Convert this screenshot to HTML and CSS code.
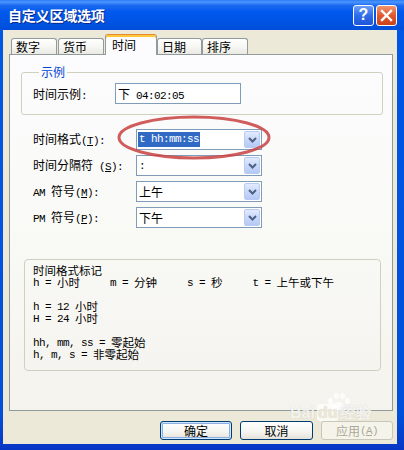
FILE: index.html
```html
<!DOCTYPE html>
<html>
<head>
<meta charset="utf-8">
<link rel="stylesheet" href="styles.css">
</head>
<body>
<div class="window">
  <div class="titlebar">
    <span class="title">自定义区域选项</span>
    <div class="tbtns">
      <div class="tbtn help">?</div>
      <div class="tbtn close"><svg width="13" height="13" viewBox="0 0 13 13"><path d="M2 2 L11 11 M11 2 L2 11" stroke="#fff" stroke-width="2.4" stroke-linecap="square"/></svg></div>
    </div>
  </div>
  <div class="client">
    <div class="tabs">
      <div class="tab t1">数字</div>
      <div class="tab t2">货币</div>
      <div class="tab active">时间</div>
      <div class="tab t4">日期</div>
      <div class="tab t5">排序</div>
    </div>
    <div class="panel">
      <fieldset class="group sample">
        <legend>示例</legend>
        <div class="srow">
          <span class="slbl">时间示例<span class="a">:</span></span>
          <div class="textbox">下<span class="a"> 04:02:05</span></div>
        </div>
      </fieldset>
      <div class="form">
        <span class="lbl">时间格式<span class="a">(<u>T</u>):</span></span>
        <div class="combo"><span class="val sel a">t hh:mm:ss</span><span class="dd"><svg width="9" height="6" viewBox="0 0 9 6"><path d="M1 1 L4.5 4.5 L8 1" fill="none" stroke="#4D6185" stroke-width="2"/></svg></span></div>
        <span class="lbl">时间分隔符<span class="a"> (<u>S</u>):</span></span>
        <div class="combo"><span class="val a">:</span><span class="dd"><svg width="9" height="6" viewBox="0 0 9 6"><path d="M1 1 L4.5 4.5 L8 1" fill="none" stroke="#4D6185" stroke-width="2"/></svg></span></div>
        <span class="lbl"><span class="a">AM </span>符号<span class="a">(<u>M</u>):</span></span>
        <div class="combo"><span class="val">上午</span><span class="dd"><svg width="9" height="6" viewBox="0 0 9 6"><path d="M1 1 L4.5 4.5 L8 1" fill="none" stroke="#4D6185" stroke-width="2"/></svg></span></div>
        <span class="lbl"><span class="a">PM </span>符号<span class="a">(<u>P</u>):</span></span>
        <div class="combo"><span class="val">下午</span><span class="dd"><svg width="9" height="6" viewBox="0 0 9 6"><path d="M1 1 L4.5 4.5 L8 1" fill="none" stroke="#4D6185" stroke-width="2"/></svg></span></div>
      </div>
      <div class="group notes">
        <div class="ln"><span class="c">时间格式标记</span></div>
        <div class="ln"><span class="a">h = </span><span class="c">小时</span><span class="a">     m = </span><span class="c">分钟</span><span class="a">     s = </span><span class="c">秒</span><span class="a">     t = </span><span class="c">上午或下午</span></div>
        <div class="ln"></div>
        <div class="ln"><span class="a">h = 12 </span><span class="c">小时</span></div>
        <div class="ln"><span class="a">H = 24 </span><span class="c">小时</span></div>
        <div class="ln"></div>
        <div class="ln"><span class="a">hh, mm, ss = </span><span class="c">零起始</span></div>
        <div class="ln"><span class="a">h, m, s = </span><span class="c">非零起始</span></div>
      </div>
    </div>
    <div class="buttons">
      <div class="btn default">确定</div>
      <div class="btn">取消</div>
      <div class="btn disabled">应用<span class="a">(<u>A</u>)</span></div>
    </div>
  </div>
  <svg class="ellipse" width="158" height="48" viewBox="0 0 158 48"><ellipse cx="79" cy="23.5" rx="75" ry="20.5" fill="none" stroke="#C8403F" stroke-width="3" opacity="0.85"/></svg>
  <div class="watermark">
    <div class="paw"><i class="p1"></i><i class="p2"></i><i class="p3"></i><i class="p4"></i><i class="p5"></i></div>
    <div class="wm-text">Bai<span class="du">du</span>经验</div>
  </div>
</div>
</body>
</html>
```
FILE: styles.css
```css
* { box-sizing: border-box; }
html, body { margin: 0; padding: 0; }
body {
  width: 404px; height: 450px; overflow: hidden;
  font-family: "Noto Sans CJK SC", "Liberation Sans", sans-serif;
  font-size: 12px; color: #000; background: #fff;
}
.a {
  font-family: "Liberation Mono", "Noto Sans CJK SC", monospace;
  font-size: 11px; letter-spacing: -0.6px;
}
.window {
  position: relative;
  width: 404px; height: 450px;
  display: flex; flex-direction: column;
  background: linear-gradient(180deg, #0058E6 0%, #0050DA 92%, #0836C4 100%);
}
.titlebar {
  height: 30px; flex: none;
  display: flex; align-items: center; justify-content: space-between;
  padding: 0 7px 0 8px;
  background: linear-gradient(180deg, #2C7BF6 0%, #4B95FF 7%, #1C69F0 18%, #0058EE 40%, #0054E3 75%, #004ED8 100%);
}
.title {
  color: #fff; font-weight: bold; font-size: 14px; letter-spacing: -0.2px;
  text-shadow: 1px 1px 0 #0B2A8C; line-height: 16px;
}
.tbtns { display: flex; gap: 2px; }
.tbtn {
  width: 21px; height: 21px; border: 1px solid #fff; border-radius: 3px;
  display: flex; align-items: center; justify-content: center;
  color: #fff; font-weight: bold;
}
.help {
  background: linear-gradient(180deg, #6C9FF8 0%, #2E6CEA 50%, #1E55D8 100%);
  font-family: "Liberation Sans", sans-serif; font-size: 16px; line-height: 16px;
}
.close {
  background: linear-gradient(180deg, #F0956E 0%, #E2592E 50%, #C9421C 100%);
}
.client {
  flex: 1;
  margin: 0 7px 6px 3px;
  background: #ECE9D8;
  padding: 4px 4px 0 6px;
  display: flex; flex-direction: column;
}
.tabs {
  display: flex; align-items: flex-end;
  height: 21px; margin: 0 0 -1px 2px;
}
.tab {
  height: 17px; width: 46px;
  border: 1px solid #919B9C; border-bottom: none;
  border-radius: 3px 3px 0 0;
  background: linear-gradient(180deg, #FFFFFF 0%, #F6F6F3 50%, #E8E7E0 100%);
  padding: 0 0 0 4px; line-height: 15px;
}
.t1, .t2 { margin-right: 1px; }
.t4 { width: 45px; }
.tab.active {
  position: relative; z-index: 1;
  height: 21px; width: 52px;
  border-top: 1px solid #E68B2C;
  box-shadow: inset 0 2px 0 #FFC73C;
  background: #FCFCFE;
  padding: 3px 0 0 6px; line-height: 14px;
}
.panel {
  width: 384px; height: 357px; flex: none;
  border: 1px solid #919B9C;
  background: linear-gradient(180deg, #FCFCFE 0%, #F9F9F6 50%, #F4F3EE 100%);
  padding: 0 9px 0 11px;
}
.group { border: 1px solid #D0D0BF; border-radius: 3px; }
.sample {
  margin: 10px 0 0 0; padding: 4px 10px 10px 11px;
  min-width: 0;
}
.sample legend {
  color: #0046D5; padding: 0 2px; margin-left: 6px;
  line-height: 14px; font-size: 12px;
}
.srow { display: flex; align-items: center; }
.slbl { width: 82px; }
.textbox {
  width: 126px; height: 21px;
  border: 1px solid #7F9DB9; background: #fff;
  padding: 0 0 0 2px; line-height: 19px;
}
.form {
  display: grid; grid-template-columns: 103px 126px;
  row-gap: 5px; margin: 14px 0 0 12px;
  align-items: center;
}
.lbl { line-height: 14px; }
.combo {
  height: 21px; border: 1px solid #7F9DB9; background: #fff;
  display: flex; align-items: center; justify-content: space-between;
  padding: 1px 1px 1px 1px;
}
.val { padding-left: 1px; line-height: 14px; }
.val.sel { background: #316AC5; color: #fff; padding: 0 1px; height: 15px; line-height: 15px; }
.dd {
  width: 16px; height: 17px;
  border: 1px solid #B9CBF3; border-radius: 2px;
  background: linear-gradient(180deg, #E3EBFD 0%, #C8D8FA 50%, #B5C9F5 100%);
  display: flex; align-items: center; justify-content: center;
}
.notes {
  margin: 31px 0 0 3px; width: 357px; height: 112px;
  border-radius: 4px;
  padding: 5px 8px;
}
.ln {
  height: 12px; line-height: 12px; white-space: pre;
  display: flex; align-items: center;
}
.ln span { line-height: 12px; }
.ln .c { font-size: 11.5px; margin-bottom: 2px; }
.buttons {
  display: flex; justify-content: flex-end; gap: 8px;
  margin-top: 10px;
}
.btn {
  width: 72px; height: 19px;
  border: 1px solid #003C74; border-radius: 3px;
  background: linear-gradient(180deg, #FFFFFF 0%, #F4F4F0 60%, #E3E1D8 100%);
  display: flex; align-items: center; justify-content: center;
  line-height: 14px;
}
.btn:nth-child(2) { width: 73px; }
.btn.default { box-shadow: inset 0 0 0 1px #CEE7FF, inset 0 0 0 2px #8EAEE8; }
.btn.disabled { border-color: #C9C7BA; color: #ACA899; background: #F5F4EA; }
.ellipse { position: absolute; left: 115px; top: 114px; }
.watermark {
  position: absolute; left: 290px; top: 392px; width: 96px; height: 30px;
  color: rgba(255,255,255,0.8);
}
.paw { position: absolute; left: 36px; top: 0; width: 24px; height: 20px; }
.paw i { position: absolute; background: rgba(255,255,255,0.75); border-radius: 50%; }
.p1 { left: 2px; top: 6px; width: 5px; height: 6px; }
.p2 { left: 8px; top: 1px; width: 5px; height: 6px; }
.p3 { left: 14px; top: 1px; width: 5px; height: 6px; }
.p4 { left: 19px; top: 6px; width: 5px; height: 6px; }
.p5 { left: 7px; top: 10px; width: 11px; height: 9px; }
.wm-text {
  position: absolute; left: 0; top: 13px;
  font-family: "Liberation Sans", sans-serif; font-weight: bold; font-size: 16px;
  line-height: 16px; text-shadow: 0 0 1px rgba(120,120,110,0.3);
}
.du { background: rgba(255,255,255,0.75); color: #ECE9D8; border-radius: 3px; padding: 0 1px; margin: 0 2px; }
```
